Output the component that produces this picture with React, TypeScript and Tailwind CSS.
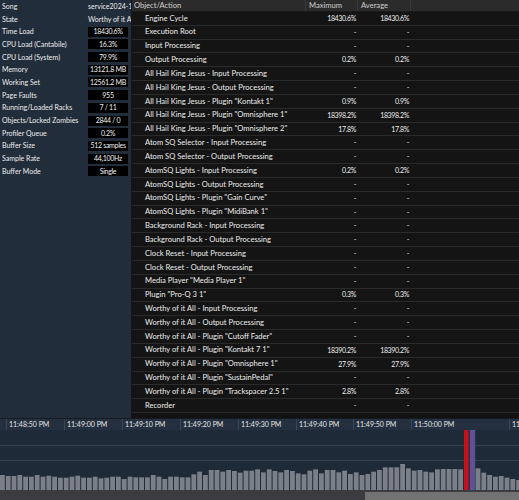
import React from "react";

type Stat = { label: string; value: string; boxed?: boolean };

const STATS: Stat[] = [
  { label: "Song", value: "service2024-1" },
  { label: "State", value: "Worthy of it All" },
  { label: "Time Load", value: "18430.6%", boxed: true },
  { label: "CPU Load (Cantabile)", value: "16.3%", boxed: true },
  { label: "CPU Load (System)", value: "79.9%", boxed: true },
  { label: "Memory", value: "13121.8 MB", boxed: true },
  { label: "Working Set", value: "12561.2 MB", boxed: true },
  { label: "Page Faults", value: "955", boxed: true },
  { label: "Running/Loaded Racks", value: "7 / 11", boxed: true },
  { label: "Objects/Locked Zombies", value: "2844 / 0", boxed: true },
  { label: "Profiler Queue", value: "0.2%", boxed: true },
  { label: "Buffer Size", value: "512 samples", boxed: true },
  { label: "Sample Rate", value: "44,100Hz", boxed: true },
  { label: "Buffer Mode", value: "Single", boxed: true },
];

const ROWS: [string, string, string][] = [
  ["Engine Cycle", "18430.6%", "18430.6%"],
  ["Execution Root", "-", "-"],
  ["Input Processing", "-", "-"],
  ["Output Processing", "0.2%", "0.2%"],
  ["All Hail King Jesus - Input Processing", "-", "-"],
  ["All Hail King Jesus - Output Processing", "-", "-"],
  ['All Hail King Jesus - Plugin "Kontakt 1"', "0.9%", "0.9%"],
  ['All Hail King Jesus - Plugin "Omnisphere 1"', "18398.2%", "18398.2%"],
  ['All Hail King Jesus - Plugin "Omnisphere 2"', "17.8%", "17.8%"],
  ["Atom SQ Selector - Input Processing", "-", "-"],
  ["Atom SQ Selector - Output Processing", "-", "-"],
  ["AtomSQ Lights - Input Processing", "0.2%", "0.2%"],
  ["AtomSQ Lights - Output Processing", "-", "-"],
  ['AtomSQ Lights - Plugin "Gain Curve"', "-", "-"],
  ['AtomSQ Lights - Plugin "MidiBank 1"', "-", "-"],
  ["Background Rack - Input Processing", "-", "-"],
  ["Background Rack - Output Processing", "-", "-"],
  ["Clock Reset - Input Processing", "-", "-"],
  ["Clock Reset - Output Processing", "-", "-"],
  ['Media Player "Media Player 1"', "-", "-"],
  ['Plugin "Pro-Q 3 1"', "0.3%", "0.3%"],
  ["Worthy of it All - Input Processing", "-", "-"],
  ["Worthy of it All - Output Processing", "-", "-"],
  ['Worthy of it All - Plugin "Cutoff Fader"', "-", "-"],
  ['Worthy of it All - Plugin "Kontakt 7 1"', "18390.2%", "18390.2%"],
  ['Worthy of it All - Plugin "Omnisphere 1"', "27.9%", "27.9%"],
  ['Worthy of it All - Plugin "SustainPedal"', "-", "-"],
  ['Worthy of it All - Plugin "Trackspacer 2.5 1"', "2.8%", "2.8%"],
  ["Recorder", "-", "-"],
];

// ruler segments: [width, label]
const TICKS: [number, string][] = [
  [6, ""],
  [58, "11:48:50 PM"],
  [58, "11:49:00 PM"],
  [58, "11:49:10 PM"],
  [58, "11:49:20 PM"],
  [58, "11:49:30 PM"],
  [57, "11:49:40 PM"],
  [58, "11:49:50 PM"],
  [98, "11:50:00 PM"],
  [10, "11"],
];

// bar tops (in 1/3 px offsets read off the trace); 0 = red spike, 1 = selected
const TOPS = [
  195, 198, 198, 195, 200, 200, 195, 200, 197, 200, 203, 203, 200, 197, 203, 203, 200, 205, 203, 200,
  200, 207, 200, 202, 202, 202, 195, 200, 207, 200, 200, 202, 202, 193, 185, 195, 180, 180, 185, 180,
  183, 188, 182, 182, 178, 187, 178, 183, 187, 180, 183, 190, 193, 182, 178, 190, 180, 180, 187, 182,
  192, 187, 195, 192, 185, 180, 172, 172, 172, 162, 175, 182, 180, 185, 187, 178, 177, 177, 177, 178,
  0, 1, 175, 188, 195, 200, 198, 203, 207, 210,
];

function LoadChart() {
  return (
    <svg width={519} height={60} className="block">
      <rect width={519} height={60} fill="#1f2a38" />
      <line x1={0} x2={519} y1={15.5} y2={15.5} stroke="#334050" />
      <line x1={0} x2={519} y1={30.5} y2={30.5} stroke="#334050" />
      {TOPS.map((t, i) => {
        const x = i * 5.8;
        if (t === 0) return <rect key={i} x={x} y={0} width={4.6} height={60} fill="#c3111d" />;
        if (t === 1)
          return (
            <rect key={i} x={x + 0.5} y={0.5} width={4.4} height={59} fill="#6c4c8b" stroke="#4b5aa6" strokeWidth={1} />
          );
        const y = t / 3 - 20;
        return <rect key={i} x={x} y={y} width={4.8} height={60 - y} fill="#7a7f88" />;
      })}
    </svg>
  );
}

export default function App() {
  return (
    <div className="h-[500px] w-[519px] overflow-hidden bg-[#1f2a38] font-['Lato',sans-serif] leading-none text-[#ececec]">
      <div className="flex h-[418px]">
        {/* status panel */}
        <aside className="w-[132px] shrink-0 overflow-hidden border-r border-[#141619] bg-[#222d3b] text-[7px]">
          {STATS.map((s) => (
            <div key={s.label} className="flex h-[12.7px] items-center whitespace-nowrap">
              <span className="w-[88px] shrink-0 pl-[2px]">{s.label}</span>
              {s.boxed ? (
                <span className="flex h-[10px] w-[40px] shrink-0 items-center justify-center bg-black tracking-[-0.3px]">
                  {s.value}
                </span>
              ) : (
                <span className="leading-[10px]">{s.value}</span>
              )}
            </div>
          ))}
        </aside>

        {/* profiler table */}
        <section className="flex-1 overflow-hidden bg-[#121212] text-[7.6px]">
          <div className="flex h-[12px] border-b border-[#1a1a1a] bg-[#2b2b2b] text-[#cfcfcf]">
            <div className="flex w-[173px] items-center pl-[2px]">Object/Action</div>
            <div className="flex w-[52px] items-center border-l border-[#3a3a3a] pl-[3px]">Maximum</div>
            <div className="flex w-[53px] items-center border-l border-[#3a3a3a] pl-[3px]">Average</div>
            <div className="flex-1 border-l border-[#3a3a3a]" />
          </div>
          {ROWS.map(([name, max, avg], i) => (
            <div key={i} className="flex h-[13.83px] items-center border-b border-[#2a2a2a] bg-[#141414]">
              <div className="w-[173px] whitespace-nowrap pl-[13px]">{name}</div>
              <div className="w-[52px] pr-[1px] text-right text-[7px] tracking-[-0.35px]">{max}</div>
              <div className="w-[53px] pr-[1px] text-right text-[7px] tracking-[-0.35px]">{avg}</div>
            </div>
          ))}
        </section>
      </div>

      {/* time ruler */}
      <div className="flex h-[12px] overflow-hidden border-t border-[#161b22] bg-[#243040] text-[7px] text-[#e4e4e4]">
        {TICKS.map(([w, label], i) => (
          <div
            key={i}
            style={{ width: w }}
            className={`flex shrink-0 items-center whitespace-nowrap pl-[2px] ${i > 0 ? "border-l border-[#3b4757]" : ""}`}
          >
            {label}
          </div>
        ))}
      </div>

      <LoadChart />

      {/* scrollbar */}
      <div className="flex h-[10px] items-end bg-[#3c3b40]">
        <div className="ml-[365px] h-[8px] flex-1 bg-[#727272]" />
      </div>
    </div>
  );
}
